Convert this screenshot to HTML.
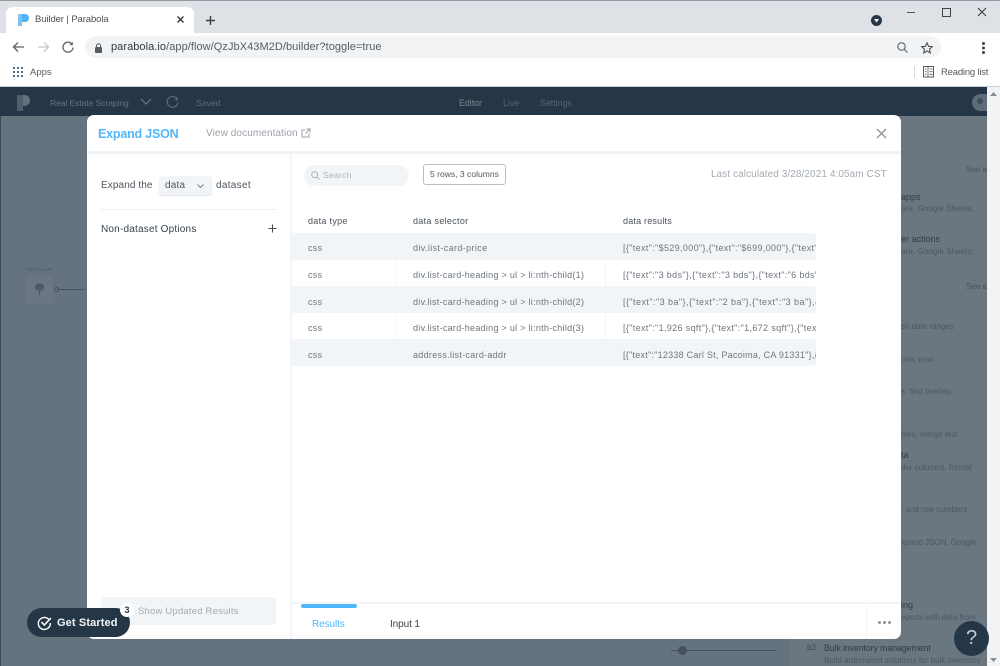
<!DOCTYPE html>
<html lang="en"><head><meta charset="utf-8"><title>Builder | Parabola</title>
<style>
html,body{margin:0;padding:0;width:1000px;height:666px;overflow:hidden;background:#fff}
body{position:relative;font-family:"Liberation Sans",sans-serif}
.a{position:absolute}
.t{position:absolute;white-space:nowrap;line-height:14px}
svg{position:absolute;overflow:visible}
.row{position:absolute;left:291px;width:525px;height:27px;border-radius:0 3px 3px 0}
.c{position:absolute;white-space:nowrap;font-size:9px;color:#6d7680;line-height:12px;letter-spacing:.3px;overflow:hidden}
</style></head><body>

<!-- chrome -->
<div class="a" style="left:0;top:0;width:1000px;height:33px;background:#dee1e6;border-top:1px solid #8f9aa3;box-sizing:border-box"></div>
<div class="a" style="left:6px;top:7px;width:188px;height:27px;background:#fff;border-radius:7px 7px 0 0"></div>
<svg style="left:17px;top:13px" width="12" height="14"><path d="M1 1h4v12H1z" fill="#7cc4f5"/><path d="M5 1h3a3.500 3.500 0 0 1 0 8H5z" fill="#4fb3f6"/></svg>
<div class="t" style="left:35px;top:13px;font-size:9.500px;color:#4a5157;letter-spacing:-.1px">Builder | Parabola</div>
<svg style="left:176px;top:15px" width="10" height="10"><path d="M1.500 1.500l6 6M7.500 1.500l-6 6" stroke="#30363b" stroke-width="1.300"/></svg>
<svg style="left:205px;top:15px" width="11" height="11"><path d="M5.500 1v9M1 5.500h9" stroke="#3a4046" stroke-width="1.400"/></svg>
<div class="a" style="left:871px;top:15px;width:11px;height:11px;border-radius:50%;background:#253746"></div>
<svg style="left:874px;top:19px" width="5" height="4"><path d="M0 0h5L2.500 3.500z" fill="#fff"/></svg>
<div class="a" style="left:907px;top:12px;width:8px;height:1px;background:#555"></div>
<div class="a" style="left:942px;top:8px;width:7px;height:7px;border:1px solid #444"></div>
<svg style="left:977px;top:7px" width="10" height="10"><path d="M1 1l8 8M9 1l-8 8" stroke="#333" stroke-width="1"/></svg>

<div class="a" style="left:0;top:33px;width:1000px;height:53px;background:#fff;border-bottom:1px solid #c9cdd1"></div>
<svg style="left:12px;top:41px" width="13" height="12"><path d="M12 6H2M6 1.500L1.500 6 6 10.500" fill="none" stroke="#5b6269" stroke-width="1.300"/></svg>
<svg style="left:37px;top:41px" width="13" height="12"><path d="M1 6h10M7 1.500L11.500 6 7 10.500" fill="none" stroke="#c4c8cc" stroke-width="1.300"/></svg>
<svg style="left:62px;top:41px" width="12" height="12"><path d="M10 3.200A5 5 0 1 0 11 6.500" fill="none" stroke="#5b6269" stroke-width="1.300"/><path d="M10.800.8v3.400H7.400z" fill="#5b6269"/></svg>
<div class="a" style="left:85px;top:36px;width:856px;height:22px;border-radius:11px;background:#f1f3f4"></div>
<svg style="left:94px;top:43px" width="9" height="10"><rect x="1" y="4" width="7" height="6" rx="1" fill="#555c62"/><path d="M2.500 4V2.800a2 2 0 0 1 4 0V4" fill="none" stroke="#555c62"/></svg>
<div class="t" style="left:111px;top:40px;font-size:11px;color:#565d63;letter-spacing:.06px"><span style="color:#33393e">parabola.io</span>/app/flow/QzJbX43M2D/builder?toggle=true</div>
<svg style="left:897px;top:42px" width="11" height="11"><circle cx="4.500" cy="4.500" r="3.700" fill="none" stroke="#5b6269" stroke-width="1.100"/><path d="M7.300 7.300l3.200 3.200" stroke="#5b6269" stroke-width="1.200"/></svg>
<svg style="left:921px;top:42px" width="12" height="12"><path d="M6 .8l1.600 3.500 3.700.4-2.800 2.500.8 3.700L6 9l-3.300 1.900.8-3.700L.7 4.700l3.700-.4z" fill="none" stroke="#4a5157" stroke-width="1.100"/></svg>
<div class="a" style="left:982px;top:42px;width:3px;height:3px;border-radius:50%;background:#3c4248;box-shadow:0 4.500px 0 #3c4248,0 9px 0 #3c4248"></div>
<svg style="left:13px;top:67px" width="10" height="10"><g fill="#4f6f92"><rect width="2" height="2"/><rect x="4" width="2" height="2"/><rect x="8" width="2" height="2"/><rect y="4" width="2" height="2"/><rect x="4" y="4" width="2" height="2"/><rect x="8" y="4" width="2" height="2"/><rect y="8" width="2" height="2"/><rect x="4" y="8" width="2" height="2"/><rect x="8" y="8" width="2" height="2"/></g></svg>
<div class="t" style="left:30px;top:66px;font-size:9.500px;color:#555c63">Apps</div>
<div class="a" style="left:914px;top:66px;width:1px;height:12px;background:#d5d8db"></div>
<svg style="left:923px;top:66px" width="11" height="12"><rect x=".5" y=".5" width="10" height="10.500" fill="none" stroke="#555c62"/><path d="M5 .5v10.500M6.500 3h3M6.500 5.700h3M6.500 8.300h3M2 3h1.500M2 5.700h1.500M2 8.300h1.500" stroke="#555c62" stroke-width=".8"/></svg>
<div class="t" style="left:941px;top:66px;font-size:9.500px;color:#555c63;letter-spacing:-.2px">Reading list</div>

<!-- app bar -->
<div class="a" style="left:0;top:87px;width:987px;height:29px;background:#253746"></div>
<svg style="left:17px;top:95px" width="13" height="17"><path d="M0 0h6v16H0z" fill="#515f6c"/><path d="M6 0h1.500a5.500 5.500 0 0 1 0 11H6z" fill="#64707c"/></svg>
<div class="t" style="left:50px;top:96px;font-size:8.600px;color:#66727d;letter-spacing:-.1px">Real Estate Scraping</div>
<svg style="left:140px;top:98px" width="12" height="8"><path d="M1 1l5 5 5-5" fill="none" stroke="#66727d" stroke-width="1.300"/></svg>
<svg style="left:166px;top:96px" width="13" height="12"><path d="M11 3A5.300 5.300 0 1 0 11.800 6.500" fill="none" stroke="#5e6a75" stroke-width="1.200"/><path d="M11.800 .8v3.400H8.400z" fill="#5e6a75"/></svg>
<div class="t" style="left:196px;top:96px;font-size:8.600px;color:#5f6b76">Saved</div>
<div class="t" style="left:459px;top:96px;font-size:8.800px;color:#7a858f">Editor</div>
<div class="t" style="left:503px;top:96px;font-size:8.800px;color:#55626e">Live</div>
<div class="t" style="left:540px;top:96px;font-size:8.800px;color:#55626e">Settings</div>
<div class="a" style="left:972px;top:94px;width:15px;height:17px;border-radius:9px 0 0 9px;background:#5f6c78"></div>
<div class="a" style="left:977px;top:98px;width:6px;height:6px;border-radius:50%;background:#3f4e5b"></div>

<!-- dimmed canvas -->
<div class="a" style="left:0;top:116px;width:987px;height:550px;background:#65737f"></div>
<div class="a" style="left:0;top:116px;width:1px;height:550px;background:#3c4a57"></div>
<div class="a" style="left:790px;top:116px;width:197px;height:550px;background:#6a7780"></div>
<div class="a" style="left:987px;top:87px;width:13px;height:579px;background:#f1f3f5"></div>
<svg style="left:990px;top:92px" width="7" height="4"><path d="M0 4L3.500 0 7 4z" fill="#8a8f94"/></svg>
<svg style="left:990px;top:658px" width="7" height="4"><path d="M0 0l3.500 4L7 0z" fill="#8a8f94"/></svg>

<div class="a" style="left:26px;top:276px;width:27px;height:28px;border-radius:3px;background:#6a7782"></div>
<svg style="left:34px;top:283px" width="11" height="13"><path d="M5.500 1c2.600 0 4 1.700 4 3.500 0 1.400-.9 2.300-2 2.500h-4c-1.100-.2-2-1.100-2-2.500C1.500 2.700 2.900 1 5.500 1zM5.500 5v7" fill="#4d5a67" stroke="#4d5a67"/></svg>
<div class="a" style="left:57px;top:289px;width:28px;height:1px;background:#48545f"></div>
<div class="a" style="left:54px;top:287px;width:3px;height:3px;border:1px solid #48545f;border-radius:50%"></div>
<div class="t" style="left:26px;top:263px;font-size:4.500px;color:#4c5864">Pull from API</div>

<div class="t" style="left:966px;top:163px;font-size:8px;color:#48535e">See a</div>
<div class="t" style="left:901px;top:190px;font-size:9px;color:#2f3d4a">apps</div>
<div class="t" style="left:901px;top:202px;font-size:8px;color:#4b5763;letter-spacing:.1px">are, Google Sheets,</div>
<div class="t" style="left:901px;top:232px;font-size:9px;color:#2f3d4a">er actions</div>
<div class="t" style="left:901px;top:245px;font-size:8px;color:#4b5763;letter-spacing:.1px">are, Google Sheets,</div>
<div class="t" style="left:966px;top:280px;font-size:8px;color:#48535e">See a</div>
<div class="t" style="left:901px;top:320px;font-size:8px;color:#4b5763">sh date ranges</div>
<div class="t" style="left:901px;top:353px;font-size:8px;color:#4b5763">min, max</div>
<div class="t" style="left:901px;top:385px;font-size:8px;color:#4b5763">s, find overlap,</div>
<div class="t" style="left:901px;top:428px;font-size:8px;color:#4b5763">bles, merge text</div>
<div class="t" style="left:901px;top:448px;font-size:9px;color:#2f3d4a">ta</div>
<div class="t" style="left:901px;top:461px;font-size:8px;color:#4b5763">der columns, format</div>
<div class="t" style="left:901px;top:503px;font-size:8px;color:#4b5763">, and row numbers</div>
<div class="t" style="left:901px;top:536px;font-size:8px;color:#4b5763">xpand JSON, Google</div>
<div class="t" style="left:901px;top:598px;font-size:9px;color:#2f3d4a">ing</div>
<div class="t" style="left:901px;top:611px;font-size:8px;color:#4b5763">eports with data from</div>
<div class="t" style="left:807px;top:641px;font-size:8px;color:#3e4b57">b2</div>
<div class="t" style="left:824px;top:641px;font-size:9px;color:#2f3d4a;letter-spacing:-.2px">Bulk inventory management</div>
<div class="t" style="left:824px;top:654px;font-size:8px;color:#4b5763;letter-spacing:.04px">Build automated solutions for bulk inventory</div>
<div class="a" style="left:671px;top:650px;width:105px;height:1px;background:#45515c"></div>
<div class="a" style="left:678px;top:646px;width:9px;height:9px;border-radius:50%;background:#45515c"></div>

<!-- modal -->
<div class="a" style="left:87px;top:115px;width:814px;height:524px;background:#fff;border-radius:7px"></div>
<div class="a" style="left:87px;top:151px;width:814px;height:3px;background:#f1f4f7"></div>
<div class="a" style="left:290px;top:154px;width:2px;height:485px;background:#f3f5f8"></div>
<div class="t" style="left:98px;top:127px;font-size:12.500px;font-weight:bold;color:#50b7fb;letter-spacing:-.2px">Expand JSON</div>
<div class="t" style="left:206px;top:127px;font-size:10px;color:#9aa1a8;letter-spacing:.1px">View documentation</div>
<svg style="left:301px;top:128px" width="10" height="10"><path d="M8 5.500V9H1V2h3.500M5.500 1H9v3.500M9 1L4.500 5.500" fill="none" stroke="#9aa1a8"/></svg>
<svg style="left:876px;top:128px" width="11" height="11"><path d="M1 1l9 9M10 1l-9 9" stroke="#8b949c" stroke-width="1.300"/></svg>

<div class="t" style="left:101px;top:179px;font-size:10px;color:#4e5760;letter-spacing:.1px">Expand the</div>
<div class="a" style="left:159px;top:176px;width:53px;height:19px;border-radius:4px;background:#f2f5f8;box-shadow:0 1px 1px #dfe4e9"></div>
<div class="t" style="left:165px;top:179px;font-size:10px;color:#4e5760;letter-spacing:.2px">data</div>
<svg style="left:197px;top:184px" width="7" height="5"><path d="M.5.500L3.500 3.500 6.500.500" fill="none" stroke="#7b848c"/></svg>
<div class="t" style="left:216px;top:179px;font-size:10px;color:#4e5760;letter-spacing:.3px">dataset</div>
<div class="a" style="left:101px;top:209px;width:176px;height:1px;background:#eef1f4"></div>
<div class="t" style="left:101px;top:223px;font-size:10px;color:#38424c;letter-spacing:.2px">Non-dataset Options</div>
<svg style="left:268px;top:224px" width="9" height="9"><path d="M4.500.500v8M.5 4.500h8" stroke="#434c55" stroke-width="1.100"/></svg>

<div class="a" style="left:101px;top:597px;width:175px;height:28px;background:#f2f5f8;border-radius:3px"></div>
<div class="t" style="left:138px;top:605px;font-size:9.500px;color:#a3aab1;letter-spacing:.2px">Show Updated Results</div>

<div class="a" style="left:304px;top:165px;width:105px;height:21px;border-radius:11px;background:#f2f5f8"></div>
<svg style="left:311px;top:171px" width="9" height="9"><circle cx="3.700" cy="3.700" r="3" fill="none" stroke="#a9b0b7"/><path d="M6 6l2.500 2.500" stroke="#a9b0b7"/></svg>
<div class="t" style="left:323px;top:168px;font-size:8.500px;color:#a9b0b7;letter-spacing:.3px">Search</div>
<div class="a" style="left:423px;top:164px;width:83px;height:21px;box-sizing:border-box;border:1px solid #b9bfc5;border-radius:3px"></div>
<div class="t" style="left:430px;top:167px;font-size:8.500px;color:#4e5760;letter-spacing:.02px">5 rows, 3 columns</div>
<div class="t" style="left:711px;top:168px;font-size:10px;color:#a4abb2;letter-spacing:.08px">Last calculated 3/28/2021 4:05am CST</div>

<div class="t" style="left:308px;top:214px;font-size:9px;color:#4a535c;letter-spacing:.3px">data type</div>
<div class="t" style="left:413px;top:214px;font-size:9px;color:#4a535c;letter-spacing:.3px">data selector</div>
<div class="t" style="left:623px;top:214px;font-size:9px;color:#4a535c;letter-spacing:.2px">data results</div>

<div class="row" style="top:233px;background:#f2f5f8"></div>
<div class="row" style="top:286px;background:#f2f5f8"></div>
<div class="row" style="top:339px;background:#f2f5f8"></div>
<div class="a" style="left:395px;top:260px;width:1px;height:79px;background:#f5f7f9"></div>
<div class="a" style="left:605px;top:260px;width:1px;height:79px;background:#f3f5f7"></div>

<div class="c" style="left:308px;top:242px">css</div>
<div class="c" style="left:413px;top:242px;letter-spacing:.38px">div.list-card-price</div>
<div class="c" style="left:623px;top:242px;width:193px;letter-spacing:.35px">[{"text":"$529,000"},{"text":"$699,000"},{"text":"$1,100,000"}]</div>
<div class="c" style="left:308px;top:269px">css</div>
<div class="c" style="left:413px;top:269px;letter-spacing:.28px">div.list-card-heading &gt; ul &gt; li:nth-child(1)</div>
<div class="c" style="left:623px;top:269px;width:193px;letter-spacing:.35px">[{"text":"3 bds"},{"text":"3 bds"},{"text":"6 bds"},{"text":"3 bds"}]</div>
<div class="c" style="left:308px;top:296px">css</div>
<div class="c" style="left:413px;top:296px;letter-spacing:.28px">div.list-card-heading &gt; ul &gt; li:nth-child(2)</div>
<div class="c" style="left:623px;top:296px;width:193px;letter-spacing:.45px">[{"text":"3 ba"},{"text":"2 ba"},{"text":"3 ba"},{"text":"2 ba"},{"text":"1 ba"}]</div>
<div class="c" style="left:308px;top:322px">css</div>
<div class="c" style="left:413px;top:322px;letter-spacing:.28px">div.list-card-heading &gt; ul &gt; li:nth-child(3)</div>
<div class="c" style="left:623px;top:322px;width:193px;letter-spacing:.35px">[{"text":"1,926 sqft"},{"text":"1,672 sqft"},{"text":"2,100 sqft"}]</div>
<div class="c" style="left:308px;top:349px">css</div>
<div class="c" style="left:413px;top:349px">address.list-card-addr</div>
<div class="c" style="left:623px;top:349px;width:193px;letter-spacing:.25px">[{"text":"12338 Carl St, Pacoima, CA 91331"},{"text":"x"}]</div>

<!-- bottom tabs -->
<div class="a" style="left:292px;top:602px;width:609px;height:2px;background:#f2f5f8"></div>
<div class="a" style="left:301px;top:604px;width:56px;height:4px;border-radius:2px;background:#50b7fb"></div>
<div class="t" style="left:312px;top:618px;font-size:10px;color:#50b7fb;letter-spacing:-.1px">Results</div>
<div class="t" style="left:390px;top:618px;font-size:10px;color:#38424c;letter-spacing:-.1px">Input 1</div>
<div class="a" style="left:866px;top:604px;width:1px;height:35px;background:#f3f5f7"></div>
<div class="a" style="left:878px;top:621px;width:3px;height:3px;border-radius:50%;background:#8b949c;box-shadow:5px 0 0 #8b949c,10px 0 0 #8b949c"></div>

<!-- get started -->
<div class="a" style="left:27px;top:608px;width:103px;height:29px;border-radius:14.500px;background:#253746"></div>
<svg style="left:37px;top:615px" width="16" height="15"><path d="M11.800 4.500A6 6 0 1 0 13.300 8" fill="none" stroke="#fff" stroke-width="1.400"/><path d="M4.500 7l2.800 3L14 3" fill="none" stroke="#fff" stroke-width="1.500"/></svg>
<div class="t" style="left:57px;top:616px;font-size:11px;font-weight:bold;color:#f4f6f8;letter-spacing:.12px">Get Started</div>
<div class="a" style="left:120px;top:603px;width:14px;height:14px;border-radius:50%;background:#fff;font-size:9px;font-weight:bold;line-height:14px;text-align:center;color:#253746">3</div>

<!-- help -->
<div class="a" style="left:954px;top:621px;width:35px;height:35px;border-radius:50%;background:#253746;color:#c4ccd3;font-size:20px;line-height:35px;text-align:center">?</div>
</body></html>
